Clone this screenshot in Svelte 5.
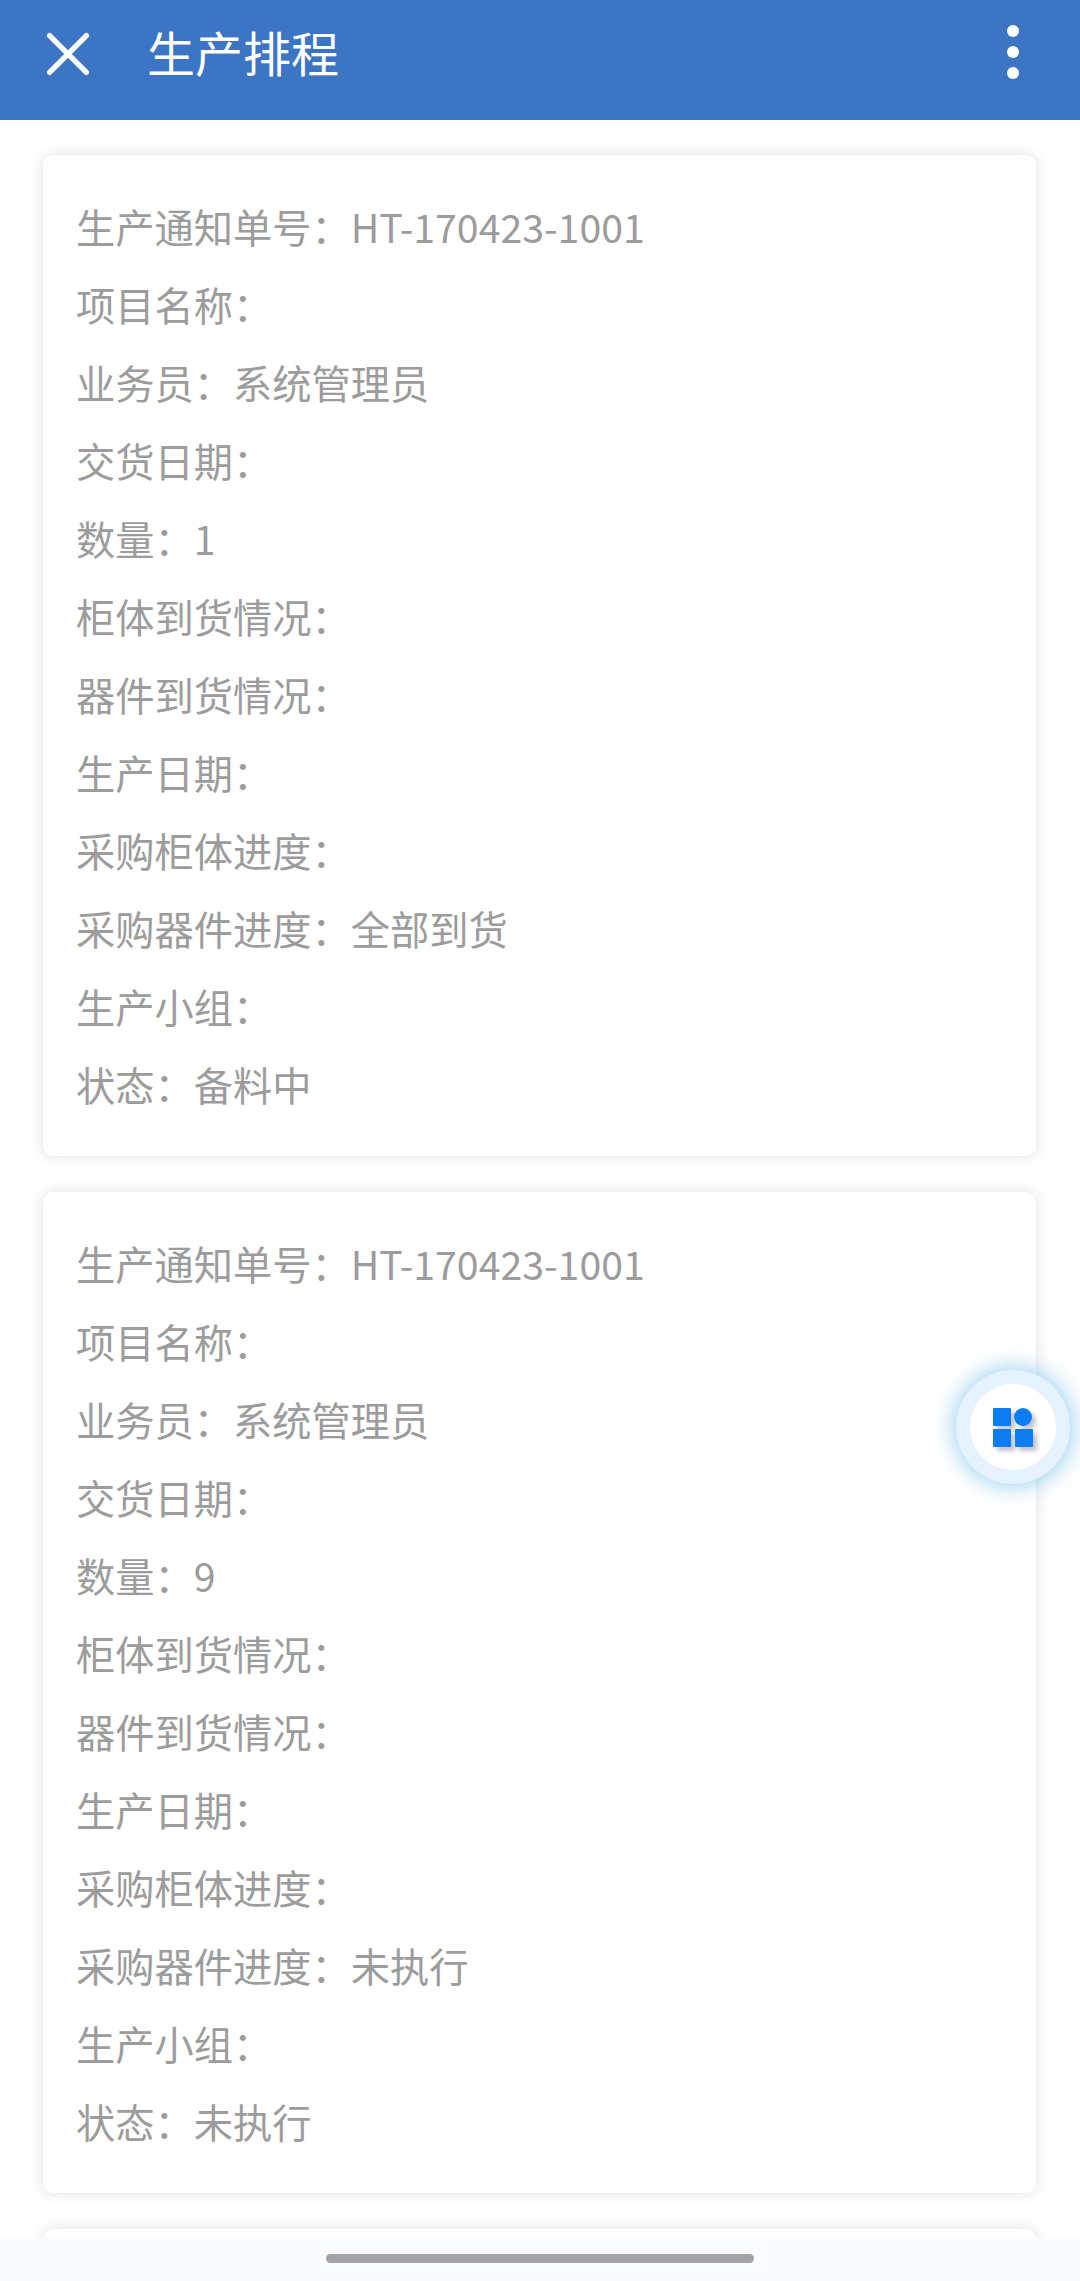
<script>
  const baseOrder = [
    ['生产通知单号', 'HT-170423-1001'],
    ['项目名称', ''],
    ['业务员', '系统管理员'],
    ['交货日期', ''],
    ['数量', '1'],
    ['柜体到货情况', ''],
    ['器件到货情况', ''],
    ['生产日期', ''],
    ['采购柜体进度', ''],
    ['采购器件进度', '全部到货'],
    ['生产小组', ''],
    ['状态', '备料中']
  ];

  function withValues(values) {
    return baseOrder.map(([label, value]) => [label, values[label] ?? value]);
  }

  // the third card only peeks out above the home bar, its rows are off screen
  const orders = [
    baseOrder,
    withValues({ '数量': '9', '采购器件进度': '未执行', '状态': '未执行' }),
    []
  ];
</script>

<div class="page">
  <header class="topbar">
    <svg class="close" width="42" height="42" viewBox="0 0 42 42" aria-hidden="true">
      <path d="M2.6 2.6 L39.4 39.4 M39.4 2.6 L2.6 39.4" stroke="#fff" stroke-width="5.4" stroke-linecap="round" fill="none" />
    </svg>
    <h1>生产排程</h1>
    <div class="more">
      <span></span>
      <span></span>
      <span></span>
    </div>
  </header>

  <main class="list">
    {#each orders as order}
      <section class="card">
        {#each order as [label, value]}
          <p>{label}：{value}</p>
        {/each}
      </section>
    {/each}
  </main>

  <button class="float" aria-label="菜单">
    <span class="float-inner">
      <svg class="grid-icon" width="40" height="39" viewBox="0 0 40 39" aria-hidden="true">
        <g fill="#0b7cf2">
          <rect x="0" y="0" width="18" height="18" rx="1" />
          <circle cx="30" cy="9" r="9" />
          <rect x="0" y="21" width="18" height="18" rx="1" />
          <rect x="22" y="21" width="18" height="18" rx="1" />
        </g>
      </svg>
    </span>
  </button>

  <div class="home-bar">
    <span></span>
  </div>
</div>

<style>
  :global(body) {
    background: #fff;
  }

  .page {
    position: relative;
    height: 2281px;
    overflow: hidden;
    background: #fefefe;
    font-family: "Noto Sans CJK SC", "Noto Sans", sans-serif;
  }

  .topbar {
    display: flex;
    align-items: center;
    height: 120px;
    box-sizing: border-box;
    padding: 0 61px 12px 47px;
    background: #3b75c4;
    color: #fff;
  }

  .close {
    flex: none;
    overflow: visible;
  }

  h1 {
    flex: 1;
    margin: 0 0 6px 58px;
    font-size: 48px;
    font-weight: 400;
    line-height: 60px;
  }

  .more {
    display: flex;
    flex-direction: column;
    gap: 9px;
    margin-bottom: 4px;
  }

  .more span {
    width: 12px;
    height: 12px;
    border-radius: 50%;
    background: #fff;
  }

  .list {
    display: flex;
    flex-direction: column;
    gap: 36px;
    padding: 35px 44px 0 43px;
  }

  .card {
    padding: 32px 33px 33px;
    border-radius: 10px;
    background: #fff;
    box-shadow: 0 0 14px rgba(0, 0, 0, 0.11);
  }

  .card:empty {
    min-height: 60px;
  }

  .card p {
    margin: 0;
    height: 78px;
    line-height: 78px;
    font-size: 39.26px;
    color: #9c9c9c;
    white-space: nowrap;
  }

  .float {
    position: absolute;
    left: 956px;
    top: 1370px;
    display: flex;
    align-items: center;
    justify-content: center;
    width: 114px;
    height: 114px;
    padding: 0;
    border: none;
    border-radius: 50%;
    background: #e6f2fd;
    box-shadow: 0 0 20px 4px rgba(110, 190, 235, 0.6);
  }

  .float-inner {
    display: flex;
    align-items: center;
    justify-content: center;
    width: 86px;
    height: 86px;
    border-radius: 50%;
    background: #fff;
  }

  .grid-icon {
    overflow: visible;
    filter: drop-shadow(4px 4px 2px rgba(120, 125, 140, 0.45));
  }

  .home-bar {
    position: absolute;
    left: 0;
    right: 0;
    bottom: 0;
    display: flex;
    justify-content: center;
    height: 44px;
    padding-top: 17px;
    box-sizing: border-box;
    background: #fafbfd;
  }

  .home-bar span {
    width: 428px;
    height: 9px;
    border-radius: 5px;
    background: #a3a3a5;
  }
</style>
